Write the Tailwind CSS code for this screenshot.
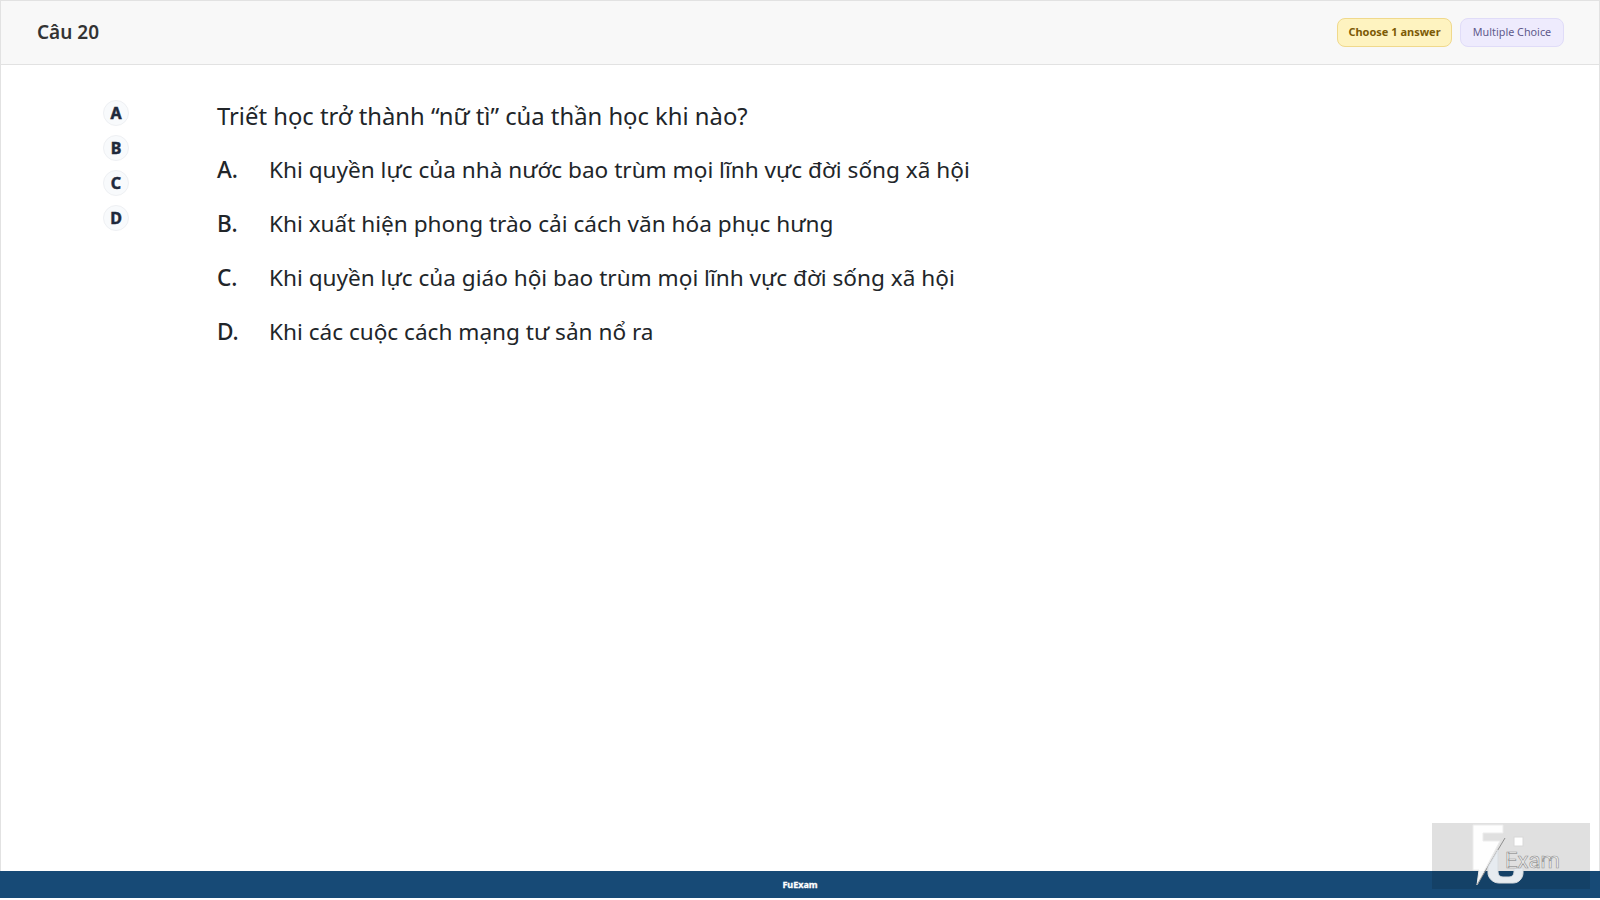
<!DOCTYPE html>
<html lang="en">
<head>
    <meta charset="UTF-8">
    <title>FuExam</title>
    <script src="https://cdn.jsdelivr.net/npm/@tailwindcss/browser@4"></script>
</head>
<body class="relative flex flex-col h-[900px] w-[1600px] overflow-hidden bg-white font-['Noto_Sans',sans-serif] text-[#212529]">
    <header class="flex items-center justify-between h-[65px] shrink-0 pl-[36px] pr-[35px] bg-[#f8f8f8] border border-[#e2e2e2]">
        <h2 class="text-[19px] font-semibold text-[#333]">Câu 20</h2>
        <div class="flex items-center gap-2">
            <span class="flex items-center justify-center w-[115px] h-[29px] rounded-lg border border-[#f0d98c] bg-[#fef3c0] text-[11px] font-bold text-[#7c5a05]">Choose 1 answer</span>
            <span class="flex items-center justify-center w-[104px] h-[29px] rounded-lg border border-[#e0dcf8] bg-[#eeebfd] text-[10.8px] text-[#5f5a8c]">Multiple Choice</span>
        </div>
    </header>
    <main class="flex flex-1 border-x border-[#e2e2e2]">
        <div class="flex flex-col gap-[9px] w-[216px] shrink-0 pl-[102px] pt-[35px]">
            <span class="flex items-center justify-center w-[26px] h-[26px] rounded-full bg-[#f8fafc] border border-[#eef0f3] text-[16px] font-bold [-webkit-text-stroke:0.5px_#1e293b] text-[#1e293b]">A</span>
            <span class="flex items-center justify-center w-[26px] h-[26px] rounded-full bg-[#f8fafc] border border-[#eef0f3] text-[16px] font-bold [-webkit-text-stroke:0.5px_#1e293b] text-[#1e293b]">B</span>
            <span class="flex items-center justify-center w-[26px] h-[26px] rounded-full bg-[#f8fafc] border border-[#eef0f3] text-[16px] font-bold [-webkit-text-stroke:0.5px_#1e293b] text-[#1e293b]">C</span>
            <span class="flex items-center justify-center w-[26px] h-[26px] rounded-full bg-[#f8fafc] border border-[#eef0f3] text-[16px] font-bold [-webkit-text-stroke:0.5px_#1e293b] text-[#1e293b]">D</span>
        </div>
        <div class="pt-[33px] leading-[36px]">
            <p class="mb-[18px] text-[23.8px]">Triết học trở thành “nữ tì” của thần học khi nào?</p>
            <ol class="flex flex-col gap-[18px] text-[22.6px]">
                <li class="flex"><span class="w-[52px] font-medium">A.</span><span>Khi quyền lực của nhà nước bao trùm mọi lĩnh vực đời sống xã hội</span></li>
                <li class="flex"><span class="w-[52px] font-medium">B.</span><span>Khi xuất hiện phong trào cải cách văn hóa phục hưng</span></li>
                <li class="flex"><span class="w-[52px] font-medium">C.</span><span>Khi quyền lực của giáo hội bao trùm mọi lĩnh vực đời sống xã hội</span></li>
                <li class="flex"><span class="w-[52px] font-medium">D.</span><span>Khi các cuộc cách mạng tư sản nổ ra</span></li>
            </ol>
        </div>
    </main>
    <footer class="flex items-center justify-center h-[27px] shrink-0 mb-[2px] pt-[1px] bg-[#174a76] text-[9px] font-bold [-webkit-text-stroke:0.3px_#fff] text-white">FuExam</footer>
    <div class="absolute left-[1432px] top-[823px] w-[158px] h-[66px] bg-black/12">
        <svg viewBox="0 0 158 66" class="w-full h-full">
            <path d="M41 2H71V10H51V18H68L45 62 47 47H41Z" fill="#fff" fill-opacity=".95" stroke="#ececec" stroke-width="1"/>
            <path d="M73 15L45 62" stroke="#8f8f8f" stroke-width="1"/>
            <path d="M56 44L66 27V49C66 52 68 54 71 54H77C80 54 82 52 82 49V45H91V50C91 55 87 60 81 60H67C61 60 56 55 56 50Z" fill="#e6ebf0" stroke="#d8dce0" stroke-width="1"/>
            <rect x="82" y="14" width="9" height="9" fill="#fff" stroke="#d8d8d8" stroke-width="1"/>
            <text x="73" y="45" textLength="55" lengthAdjust="spacingAndGlyphs" font-family="Roboto, sans-serif" font-size="22" fill="#f4f4f4" stroke="#9a9a9a" stroke-width=".7">Exam</text>
        </svg>
    </div>
</body>
</html>
